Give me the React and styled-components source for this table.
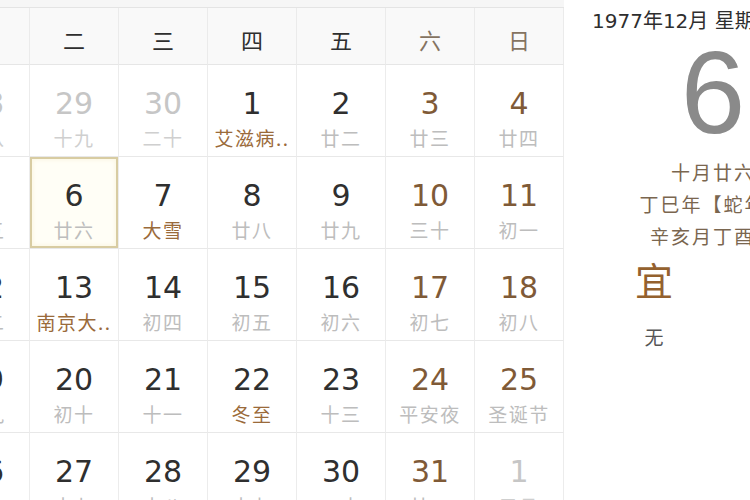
import React from 'react';
import styled, { createGlobalStyle } from 'styled-components';

const Global = createGlobalStyle`
  html, body { margin: 0; padding: 0; background: #fff; overflow: hidden; }
  body {
    width: 750px; height: 500px;
    font-family: "DejaVu Sans", "Noto Sans CJK SC", sans-serif;
  }
`;

const Page = styled.div`
  display: flex;
  align-items: flex-start;
  width: 750px;
  height: 500px;
  overflow: hidden;
`;

const Calendar = styled.div`
  flex: 0 0 623px;
  margin-left: -59px;
  background: #fff;
`;

const TopStrip = styled.div`
  height: 8px;
  box-sizing: border-box;
  background: #f6f6f6;
  border-bottom: 1px solid #e4e4e4;
`;

const Grid = styled.div`
  display: grid;
  grid-template-columns: repeat(7, 89px);
`;

const HeadCell = styled.div`
  height: 57px;
  box-sizing: border-box;
  display: flex;
  align-items: center;
  justify-content: center;
  padding-top: 6px;
  background: #f9f9f9;
  border-right: 1px solid #ebebeb;
  border-bottom: 1px solid #e6e6e6;
  font-family: "Noto Sans CJK SC", sans-serif;
  font-size: 22px;
  color: ${p => (p.$weekend ? '#857361' : '#2e2e2e')};
`;

const numColor = { other: '#c6c6c6', normal: '#2f2f2f', weekend: '#7f5a37' };

const DayCell = styled.div`
  height: 92px;
  box-sizing: border-box;
  display: flex;
  flex-direction: column;
  align-items: center;
  padding-top: 24px;
  border-right: 1px solid #ececec;
  border-bottom: 1px solid #e8e8e8;
  background: ${p => (p.$selected ? '#fffef6' : '#fff')};
  box-shadow: ${p => (p.$selected ? 'inset 0 0 0 2px #d8cca2, inset 0 0 4px 3px #fbf6e2' : 'none')};
`;

const DayNum = styled.div`
  font-family: "DejaVu Sans", sans-serif;
  font-size: 30px;
  line-height: 1;
  color: ${p => numColor[p.$type]};
`;

const Lunar = styled.div`
  margin-top: 9px;
  font-family: "Noto Sans CJK SC", sans-serif;
  font-size: 19px;
  line-height: 1;
  letter-spacing: 1.5px;
  white-space: nowrap;
  color: ${p => (p.$fest ? '#9a6a3a' : p.$type === 'other' ? '#cfcfcf' : '#bdbdbd')};
`;

const Panel = styled.div`
  flex: 0 0 298px;
  display: flex;
  flex-direction: column;
  font-family: "Noto Sans CJK SC", sans-serif;
`;

const Title = styled.div`
  margin: 11px 0 0 28px;
  font-family: "DejaVu Sans", "Noto Sans CJK SC", sans-serif;
  font-size: 20px;
  line-height: 20px;
  white-space: nowrap;
  color: #2e2e2e;
`;

const BigDay = styled.div`
  margin-top: 4px;
  text-align: center;
  font-family: "Liberation Sans", sans-serif;
  font-size: 116px;
  line-height: 1;
  color: #8a8a8a;
`;

const LunarLines = styled.div`
  margin-top: 5px;
  display: flex;
  flex-direction: column;
  align-items: center;
`;

const LunarLine = styled.div`
  font-size: 19px;
  line-height: 32px;
  letter-spacing: 2px;
  white-space: nowrap;
  color: #7a664f;
`;

const YiJi = styled.div`
  margin-top: 5px;
  display: grid;
  grid-template-columns: 118px 118px;
  justify-content: center;
`;

const YiJiCol = styled.div`
  display: flex;
  flex-direction: column;
  align-items: center;
`;

const YiJiHead = styled.div`
  font-size: 38px;
  line-height: 44px;
  color: #94612e;
`;

const YiJiItem = styled.div`
  margin-top: 24px;
  font-size: 19px;
  line-height: 24px;
  color: #555;
`;

const weekdays = ['一', '二', '三', '四', '五', '六', '日'];

const c = (d, l, type = 'normal', extra = {}) => ({ d, l, type, ...extra });

const rows = [
  [c(28, '十八', 'other'), c(29, '十九', 'other'), c(30, '二十', 'other'), c(1, '艾滋病..', 'normal', { fest: true }), c(2, '廿二'), c(3, '廿三', 'weekend'), c(4, '廿四', 'weekend')],
  [c(5, '廿五'), c(6, '廿六', 'normal', { sel: true }), c(7, '大雪', 'normal', { fest: true }), c(8, '廿八'), c(9, '廿九'), c(10, '三十', 'weekend'), c(11, '初一', 'weekend')],
  [c(12, '初二'), c(13, '南京大..', 'normal', { fest: true }), c(14, '初四'), c(15, '初五'), c(16, '初六'), c(17, '初七', 'weekend'), c(18, '初八', 'weekend')],
  [c(19, '初九'), c(20, '初十'), c(21, '十一'), c(22, '冬至', 'normal', { fest: true }), c(23, '十三'), c(24, '平安夜', 'weekend'), c(25, '圣诞节', 'weekend')],
  [c(26, '十六'), c(27, '十七'), c(28, '十八'), c(29, '十九'), c(30, '二十'), c(31, '廿一', 'weekend'), c(1, '元旦', 'other')],
];

export default function App() {
  return (
    <>
      <Global />
      <Page>
        <Calendar>
          <TopStrip />
          <Grid>
            {weekdays.map((w, i) => (
              <HeadCell key={w} $weekend={i >= 5}>{w}</HeadCell>
            ))}
            {rows.flat().map((cell, i) => (
              <DayCell key={i} $selected={cell.sel}>
                <DayNum $type={cell.type}>{cell.d}</DayNum>
                <Lunar $fest={cell.fest} $type={cell.type}>{cell.l}</Lunar>
              </DayCell>
            ))}
          </Grid>
        </Calendar>
        <Panel>
          <Title>1977年12月 星期二</Title>
          <BigDay>6</BigDay>
          <LunarLines>
            <LunarLine>十月廿六</LunarLine>
            <LunarLine>丁巳年【蛇年】</LunarLine>
            <LunarLine>辛亥月丁酉日</LunarLine>
          </LunarLines>
          <YiJi>
            <YiJiCol>
              <YiJiHead>宜</YiJiHead>
              <YiJiItem>无</YiJiItem>
            </YiJiCol>
            <YiJiCol>
              <YiJiHead>忌</YiJiHead>
              <YiJiItem>无</YiJiItem>
            </YiJiCol>
          </YiJi>
        </Panel>
      </Page>
    </>
  );
}
